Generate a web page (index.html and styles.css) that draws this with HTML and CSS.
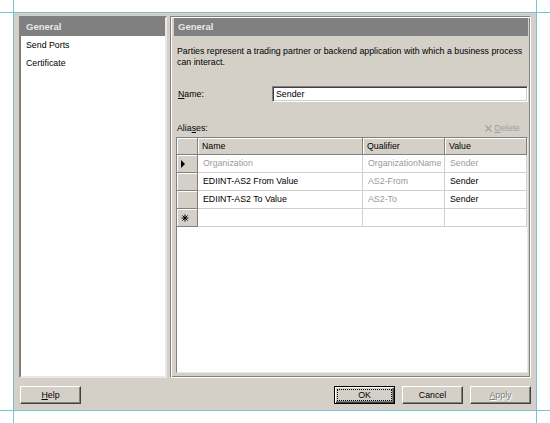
FILE: index.html
```html
<!DOCTYPE html>
<html lang="en">
<head>
  <meta charset="UTF-8">
  <title>Party Properties - General</title>
  <link rel="stylesheet" href="styles.css">
</head>
<body>
  <!-- layout guide lines around the dialog -->
  <div class="guide guide-v guide-left"></div>
  <div class="guide guide-v guide-right"></div>
  <div class="guide guide-h guide-top"></div>
  <div class="guide guide-h guide-bottom"></div>

  <div class="dialog">
    <div class="main">
      <div class="nav">
        <div class="nav-head">General</div>
        <div class="nav-item">Send Ports</div>
        <div class="nav-item">Certificate</div>
      </div>

      <div class="page">
        <div class="page-head">General</div>
        <p class="desc">Parties represent a trading partner or backend application with which a business process<br>can interact.</p>

        <div class="field">
          <label class="field-label"><u>N</u>ame:</label>
          <div class="input">Sender</div>
        </div>

        <div class="aliases-bar">
          <span>Alia<u>s</u>es:</span>
          <span class="delete">
            <svg width="7" height="7" viewBox="0 0 7 7"><path d="M0.5 0.5 L6.5 6.5 M6.5 0.5 L0.5 6.5" stroke="#a0a0a0" stroke-width="1.1" fill="none"/></svg>
            <span><u>D</u>elete</span>
          </span>
        </div>

        <div class="table">
          <div class="th"></div>
          <div class="th">Name</div>
          <div class="th">Qualifier</div>
          <div class="th">Value</div>

          <div class="rh"><span class="arrow"></span></div>
          <div class="td muted">Organization</div>
          <div class="td muted">OrganizationName</div>
          <div class="td muted">Sender</div>

          <div class="rh"></div>
          <div class="td">EDIINT-AS2 From Value</div>
          <div class="td muted">AS2-From</div>
          <div class="td">Sender</div>

          <div class="rh"></div>
          <div class="td">EDIINT-AS2 To Value</div>
          <div class="td muted">AS2-To</div>
          <div class="td">Sender</div>

          <div class="rh">
            <svg width="8" height="8" viewBox="0 0 8 8"><path d="M4 0.5 V7.5 M0.5 4 H7.5 M1.5 1.5 L6.5 6.5 M6.5 1.5 L1.5 6.5" stroke="#000" stroke-width="1" fill="none"/></svg>
          </div>
          <div class="td"></div>
          <div class="td"></div>
          <div class="td"></div>
        </div>
      </div>
    </div>

    <div class="footer">
      <button class="btn" type="button"><u>H</u>elp</button>
      <button class="btn btn-default" type="button"><span class="focus">OK</span></button>
      <button class="btn" type="button">Cancel</button>
      <button class="btn btn-disabled" type="button"><u>A</u>pply</button>
    </div>
  </div>
</body>
</html>
```

FILE: styles.css
```css
*{margin: 0; padding: 0; box-sizing: border-box;}

body{
  position: relative;
  height: 423px;
  overflow: hidden;
  background: #fff;
  font-family: "Liberation Sans", Arial, sans-serif;
  font-size: 8.8px;
  color: #000;
}

/* guide lines */
.guide{
  position: absolute;
  background: #78c3d3;
}
.guide-v{ top: 0; bottom: 0; width: 1px; }
.guide-h{ left: 0; right: 0; height: 1px; }
.guide-left{ left: 13px; }
.guide-right{ left: 536px; }
.guide-top{ top: 12px; }
.guide-bottom{ top: 410px; }

.dialog{
  margin: 13px 0 0 14px;
  width: 522px;
  height: 397px;
  padding: 3px 5px 6px 5px;
  background: #d4d0c8;
  display: flex;
  flex-direction: column;
}

.main{
  display: flex;
  gap: 3px;
  height: 362px;
}

/* left list */
.nav{
  width: 148px;
  background: #fff;
  border: 2px solid;
  border-color: #808080 #e8e8e8 #e8e8e8 #808080;
}
.nav-head{
  height: 18px;
  line-height: 18px;
  padding-left: 5px;
  background: #808080;
  color: #e8e8e8;
  font-weight: bold;
  font-size: 9.5px;
}
.nav-item{
  height: 18px;
  line-height: 18px;
  padding-left: 5px;
}

/* right page */
.page{
  flex: 1;
  display: flex;
  flex-direction: column;
  padding: 1px 2px 2px 3px;
  border: 1px solid;
  border-color: #808080 #fff #fff #808080;
  box-shadow: inset 1px 1px #fff, inset -1px -1px #808080;
}
.page-head{
  height: 18px;
  line-height: 18px;
  padding-left: 4px;
  background: #808080;
  color: #e8e8e8;
  font-weight: bold;
  font-size: 9.5px;
}
.desc{
  margin: 10px 0 0 3px;
  line-height: 10.6px;
  white-space: nowrap;
}

.field{
  display: flex;
  align-items: center;
  height: 16px;
  margin-top: 19px;
}
.field-label{
  width: 98px;
  padding-left: 4px;
}
.input{
  flex: 1;
  height: 16px;
  line-height: 14px;
  padding-left: 3px;
  background: #fff;
  border: 1px solid;
  border-color: #808080 #fff #fff #808080;
  box-shadow: inset 1px 1px #404040, inset -1px -1px #d4d0c8;
}

.aliases-bar{
  display: flex;
  justify-content: space-between;
  align-items: center;
  height: 12px;
  margin-top: 20px;
  padding: 0 8px 0 3px;
}
.delete{
  display: flex;
  align-items: center;
  gap: 3px;
  color: #a0a0a0;
}

/* aliases grid */
.table{
  flex: 1;
  margin: 3px 0 2px 2px;
  background: #fff;
  border: 1px solid;
  border-color: #808080 #e8e8e8 #e8e8e8 #808080;
  display: grid;
  grid-template-columns: 21px 165px 82px 1fr;
  grid-template-rows: 17px repeat(4, 18px);
  align-content: start;
}
.th, .rh{
  background: #d4d0c8;
  border-right: 1px solid #808080;
  border-bottom: 1px solid #808080;
  box-shadow: inset 1px 1px #fff;
}
.th{
  padding-left: 4px;
  line-height: 16px;
}
.rh{
  display: flex;
  align-items: center;
  padding-left: 4px;
}
.td{
  padding-left: 5px;
  line-height: 17px;
  white-space: nowrap;
  overflow: hidden;
  border-right: 1px solid #d4d0c8;
  border-bottom: 1px solid #d4d0c8;
}
.muted{
  color: #9a9a9a;
}
.arrow{
  width: 0;
  height: 0;
  border-left: 4px solid #000;
  border-top: 4px solid transparent;
  border-bottom: 4px solid transparent;
}

/* buttons */
.footer{
  display: flex;
  gap: 7px;
  height: 18px;
  margin-top: 8px;
  padding-left: 1px;
}
.btn{
  width: 61px;
  height: 18px;
  padding: 0;
  font-family: "Liberation Sans", Arial, sans-serif;
  font-size: 8.8px;
  color: #000;
  background: #d4d0c8;
  border: 1px solid;
  border-color: #fff #404040 #404040 #fff;
  box-shadow: inset -1px -1px #808080;
}
.btn-default{
  margin-left: auto;
  border-color: #000;
  box-shadow: inset 1px 1px #fff, inset -1px -1px #404040, inset -2px -2px #808080;
}
.focus{
  display: flex;
  align-items: center;
  justify-content: center;
  height: 100%;
  outline: 1px dotted #000;
  outline-offset: -3px;
}
.btn-disabled{
  color: #808080;
  text-shadow: 1px 1px #fff;
}
```
